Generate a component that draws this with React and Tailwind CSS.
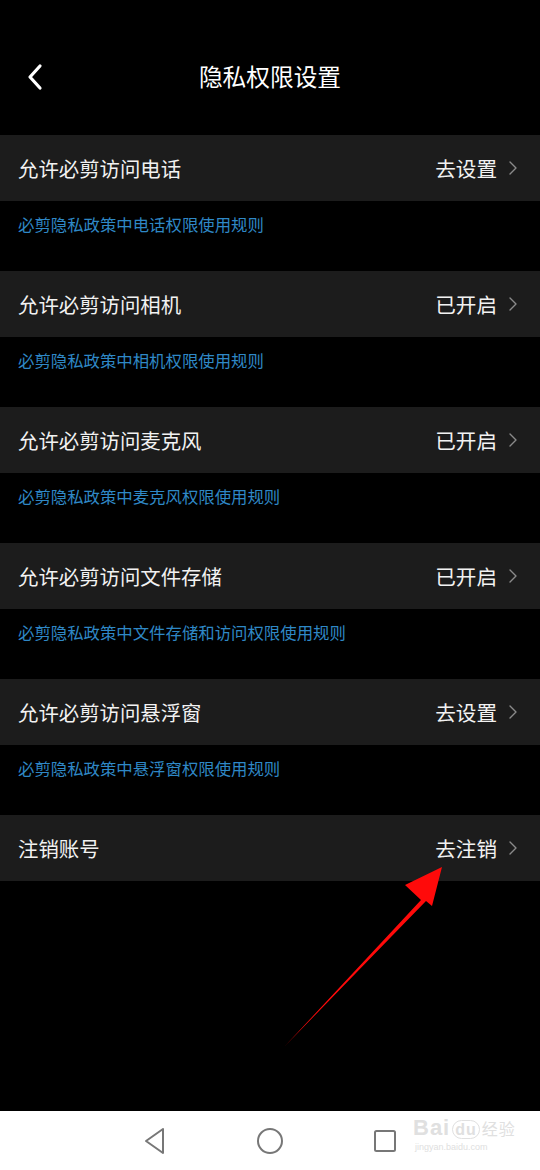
const font = { fontFamily: '"Noto Sans CJK SC", "Noto Sans", sans-serif' };

const items = [
  { title: '允许必剪访问电话', status: '去设置', desc: '必剪隐私政策中电话权限使用规则' },
  { title: '允许必剪访问相机', status: '已开启', desc: '必剪隐私政策中相机权限使用规则' },
  { title: '允许必剪访问麦克风', status: '已开启', desc: '必剪隐私政策中麦克风权限使用规则' },
  { title: '允许必剪访问文件存储', status: '已开启', desc: '必剪隐私政策中文件存储和访问权限使用规则' },
  { title: '允许必剪访问悬浮窗', status: '去设置', desc: '必剪隐私政策中悬浮窗权限使用规则' },
];

function Chevron() {
  return (
    <svg width="10" height="16" viewBox="0 0 10 16" className="ml-[11px]">
      <path d="M2 2l6 6-6 6" fill="none" stroke="#8a8a8a" strokeWidth="1.4" strokeLinecap="round" strokeLinejoin="round" />
    </svg>
  );
}

function Row({ title, status }) {
  return (
    <div className="h-[66px] bg-[#1c1c1c] flex items-center justify-between pl-[18px] pr-[22px]">
      <span className="text-[20.4px] text-[#f2f2f2] leading-none">{title}</span>
      <div className="flex items-center">
        <span className="text-[20.6px] text-[#f2f2f2] leading-none">{status}</span>
        <Chevron />
      </div>
    </div>
  );
}

export default function App() {
  return (
    <div className="relative w-[540px] h-[1170px] bg-black flex flex-col overflow-hidden" style={font}>
      <div className="h-[135px] pt-[45px]">
        <div className="relative h-[64px] flex items-center justify-center">
          <svg width="20" height="28" viewBox="0 0 20 28" className="absolute left-[25px] top-[18px]">
            <path d="M15 3L5 14l10 11" fill="none" stroke="#ffffff" strokeWidth="3.2" strokeLinecap="round" strokeLinejoin="round" />
          </svg>
          <span className="text-[23.7px] text-white leading-none">隐私权限设置</span>
        </div>
      </div>

      {items.map((it) => (
        <div key={it.title}>
          <Row title={it.title} status={it.status} />
          <div className="h-[70px] pl-[18px] pt-[11px]">
            <span className="text-[16.4px] text-[#2f88c6] leading-[22px]">{it.desc}</span>
          </div>
        </div>
      ))}

      <Row title="注销账号" status="去注销" />

      <div className="flex-1" />

      <div className="relative h-[59px] bg-white flex items-center pl-[135px] gap-[75px]">
        <div className="w-[40px] flex justify-center">
          <svg width="26" height="30" viewBox="0 0 26 30">
            <path d="M21 3L4 15l17 12z" fill="none" stroke="#777777" strokeWidth="2" strokeLinejoin="round" />
          </svg>
        </div>
        <div className="w-[40px] flex justify-center">
          <svg width="28" height="28" viewBox="0 0 28 28">
            <circle cx="14" cy="14" r="12" fill="none" stroke="#777777" strokeWidth="2" />
          </svg>
        </div>
        <div className="w-[40px] flex justify-center">
          <svg width="26" height="26" viewBox="0 0 26 26">
            <rect x="3" y="3" width="20" height="20" rx="1.5" fill="none" stroke="#777777" strokeWidth="2" />
          </svg>
        </div>
        <div className="absolute left-[413px] top-[6px] flex flex-col items-start">
          <span className="text-[22px] text-[#e0e0e0] leading-none font-bold tracking-[1px]" style={{ fontFamily: '"Liberation Sans", "Noto Sans CJK SC", sans-serif' }}>
            Bai<span className="text-[16px] border border-[#e0e0e0] rounded-full px-[2px] mx-[2px]">du</span>
            <span className="text-[16px] font-normal">经验</span>
          </span>
          <span className="text-[9px] text-[#e0e0e0] leading-none mt-[4px] ml-[2px]" style={{ fontFamily: '"Liberation Sans", sans-serif' }}>
            jingyan.baidu.com
          </span>
        </div>
      </div>

      <svg className="absolute left-0 top-0 pointer-events-none" width="540" height="1170" viewBox="0 0 540 1170">
        <path d="M285 1046 L421 900 L405 885 L442 867 L432 906 L426 901 Z" fill="#ff0a0a" />
      </svg>
    </div>
  );
}
